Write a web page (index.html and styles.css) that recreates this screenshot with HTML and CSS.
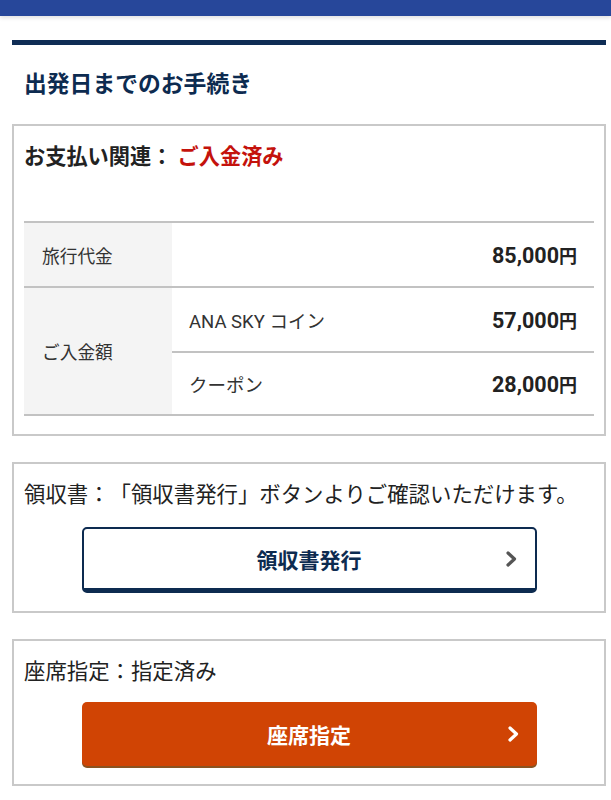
FILE: index.html
```html
<!DOCTYPE html>
<html lang="ja">
<head>
<meta charset="utf-8">
<link rel="stylesheet" href="styles.css">
</head>
<body>
<div class="topbar"></div>
<main class="page">
  <div class="rule"></div>
  <h2 class="heading">出発日までのお手続き</h2>

  <section class="box pay">
    <p class="pay-title">お支払い関連： <span class="paid">ご入金済み</span></p>
    <div class="table">
      <div class="row">
        <div class="label">旅行代金</div>
        <div class="cells">
          <div class="cell"><span class="name"></span><span class="amount">85,000<small>円</small></span></div>
        </div>
      </div>
      <div class="row">
        <div class="label">ご入金額</div>
        <div class="cells">
          <div class="cell"><span class="name">ANA SKY コイン</span><span class="amount">57,000<small>円</small></span></div>
          <div class="cell"><span class="name">クーポン</span><span class="amount">28,000<small>円</small></span></div>
        </div>
      </div>
    </div>
  </section>

  <section class="box">
    <p class="note">領収書：「領収書発行」ボタンよりご確認いただけます。</p>
    <a class="btn btn-white">領収書発行
      <svg class="chev" viewBox="0 0 14 18" width="14" height="18"><path d="M4 3 L10.5 9 L4 15" fill="none" stroke="currentColor" stroke-width="3.2" stroke-linecap="round" stroke-linejoin="round"/></svg>
    </a>
  </section>

  <section class="box">
    <p class="note">座席指定：指定済み</p>
    <a class="btn btn-orange">座席指定
      <svg class="chev" viewBox="0 0 14 18" width="14" height="18"><path d="M4 3 L10.5 9 L4 15" fill="none" stroke="currentColor" stroke-width="3.2" stroke-linecap="round" stroke-linejoin="round"/></svg>
    </a>
  </section>
</main>
</body>
</html>
```

FILE: styles.css
```css
* { box-sizing: border-box; }
html, body { margin: 0; padding: 0; background: #fff; }
body {
  font-family: Roboto, "Noto Sans CJK JP", sans-serif;
  color: #222;
  text-spacing-trim: space-all;
}
.topbar {
  height: 16px;
  background: #27479a;
  box-shadow: 0 2px 4px rgba(0,0,0,0.12);
}
.page {
  padding: 24px 5px 40px 12px;
}
.rule {
  height: 5px;
  background: #0f2d55;
}
.heading {
  margin: 25px 0 0 12px;
  font-size: 22.8px;
  line-height: 30px;
  font-weight: 700;
  color: #0d2b50;
}
.box {
  margin-top: 24px;
  border: 2px solid #c9c9c9;
  padding: 17px 10px 18px 10px;
}
.box + .box { margin-top: 26px; }
.pay-title {
  margin: 0;
  font-size: 21.2px;
  line-height: 28px;
  font-weight: 700;
  color: #222;
}
.paid { color: #c4120c; }
.table {
  margin-top: 50px;
  border-top: 2px solid #c2c2c2;
}
.row {
  display: flex;
  border-bottom: 2px solid #c2c2c2;
}
.label {
  width: 148px;
  flex: none;
  background: #f4f4f4;
  display: flex;
  align-items: center;
  padding-left: 18px;
  font-size: 17.7px;
  color: #333;
}
.cells { flex: 1; }
.cell {
  height: 63px;
  display: flex;
  align-items: center;
  justify-content: space-between;
  padding: 0 17px 0 17px;
  font-size: 18.5px;
  color: #333;
}
.cell + .cell { border-top: 2px solid #c2c2c2; }
.amount {
  font-size: 21.5px;
  font-weight: 700;
  color: #222;
}
.amount small {
  font-size: 18px;
  font-weight: 700;
}
.note {
  margin: 0;
  font-size: 21.4px;
  line-height: 28px;
  color: #222;
}
.btn {
  position: relative;
  display: flex;
  align-items: center;
  justify-content: center;
  width: 455px;
  height: 66px;
  margin: 18px auto 0;
  border-radius: 5px;
  font-size: 21px;
  font-weight: 700;
  text-decoration: none;
}
.btn-white {
  background: #fff;
  color: #0d2b50;
  border: 2px solid #0d2b50;
  border-bottom-width: 5px;
}
.btn-orange {
  margin-top: 16px;
  height: 64px;
  background: #d04404;
  color: #fff;
  box-shadow: 0 2px 0 #8b5320;
}
.chev {
  position: absolute;
  right: 17px;
  top: 50%;
  transform: translateY(-50%);
}
.btn-white .chev { color: #555; }
.btn-orange .chev { color: #fff; }
```
